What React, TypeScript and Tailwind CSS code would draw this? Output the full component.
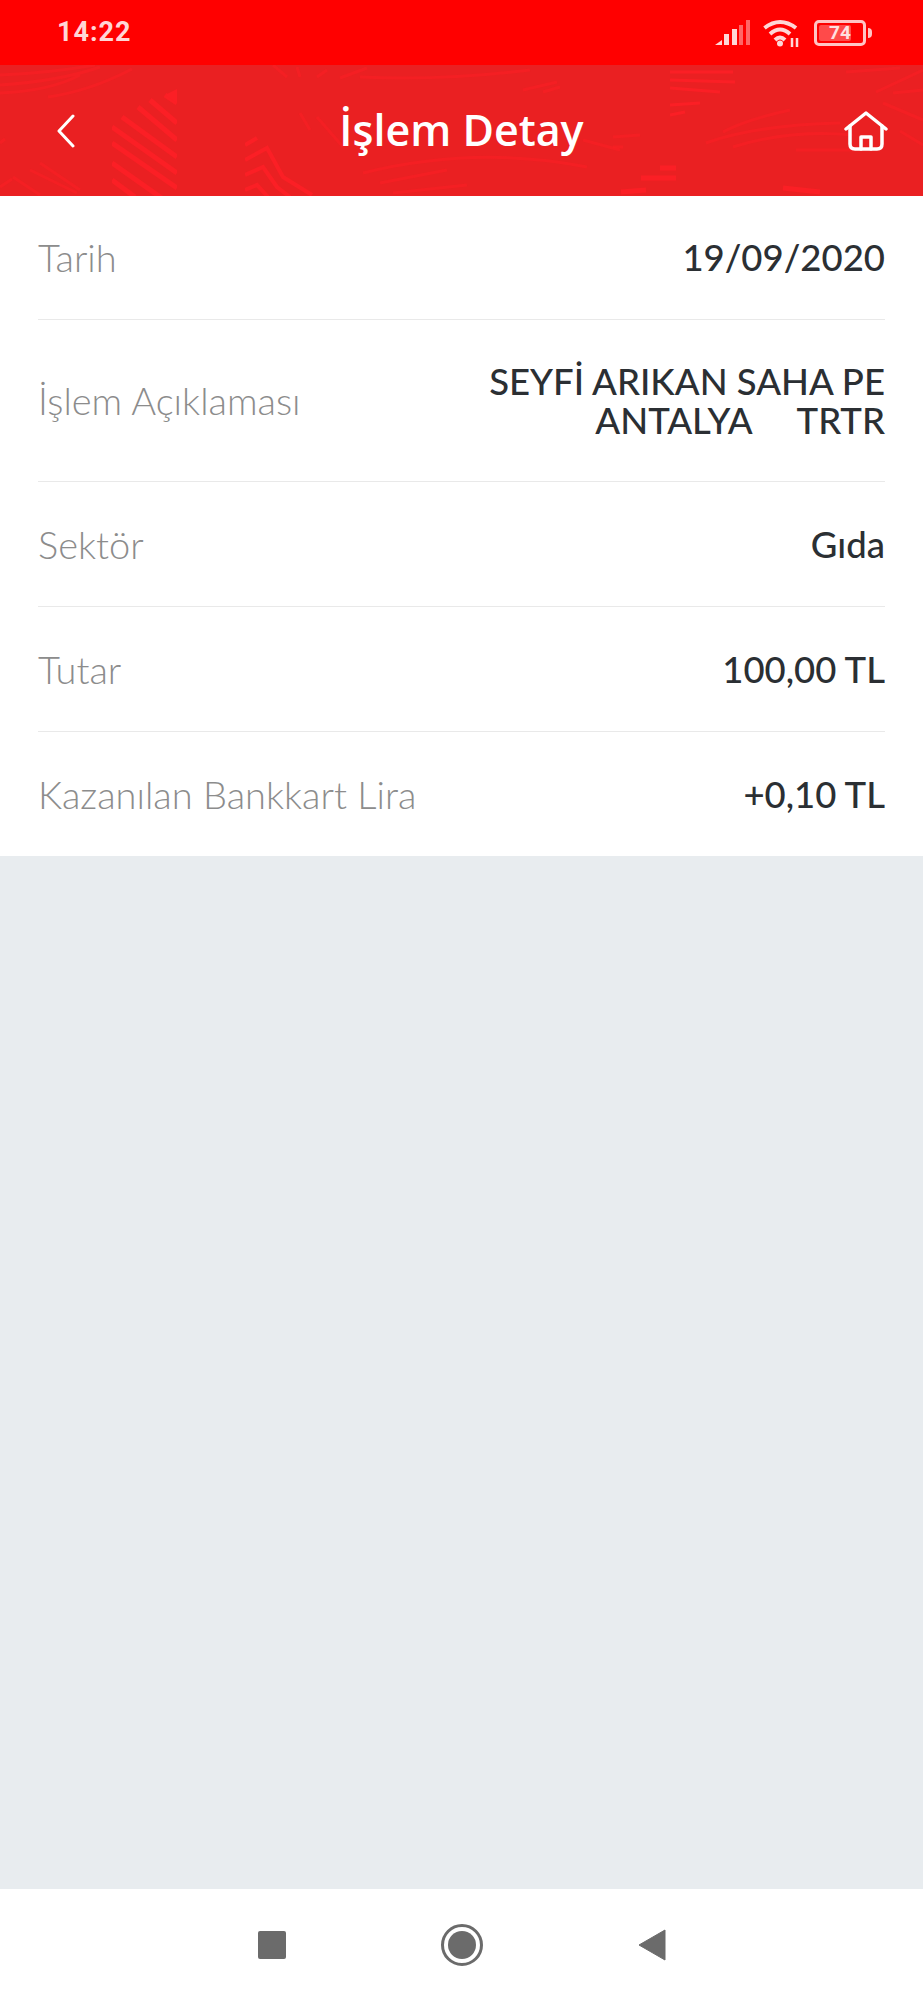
const rows = [
  { label: 'Tarih', value: ['19/09/2020'], height: 'h-[124px] border-b' },
  { label: 'İşlem Açıklaması', value: ['SEYFİ ARIKAN SAHA PE', 'ANTALYA     TRTR'], height: 'h-[162px] border-b' },
  { label: 'Sektör', value: ['Gıda'], height: 'h-[125px] border-b' },
  { label: 'Tutar', value: ['100,00 TL'], height: 'h-[125px] border-b' },
  { label: 'Kazanılan Bankkart Lira', value: ['+0,10 TL'], height: 'h-[124px]' },
]

// faint wave and stripe patches behind the title bar
function HeaderPattern() {
  return (
    <svg className="absolute inset-0 h-full w-full" viewBox="0 0 923 131" fill="none" stroke="#fb1f25" strokeWidth="4">
      <defs>
        <clipPath id="patchA"><rect x="112" y="24" width="65" height="107" /></clipPath>
        <clipPath id="patchB"><rect x="245" y="70" width="90" height="61" /></clipPath>
        <clipPath id="patchC"><rect x="670" y="0" width="65" height="56" /></clipPath>
      </defs>
      <g clipPath="url(#patchA)" strokeWidth="5">
        <path d="M122 52L177 92M138 42L177 75M150 35L177 58M165 30L177 38M112 62L177 108M112 78L177 123M112 98L163 134M112 115L135 132" />
        <path d="M177 24L165 30L177 38Z" fill="#fb1f25" stroke="none" />
      </g>
      <g clipPath="url(#patchB)" strokeWidth="4">
        <path d="M245 80L257 73M245 95L267 83L283 112L312 130M245 110L263 102L277 122L290 132M245 125L257 120L268 132" />
      </g>
      <g strokeWidth="3" strokeOpacity="0.55">
        <path d="M0 10Q50 8 95 0M0 20Q60 16 100 2M0 28Q50 26 80 10M48 32Q90 26 132 4" />
        <path d="M13 112L40 130M30 105L77 128M40 98L80 125M0 122L12 114" />
        <path d="M0 78L5 74M273 0L287 12M297 2L300 12M300 48L310 65" />
        <path d="M317 12L327 5M340 13L367 3M360 12Q443 16 530 5M523 25L557 17M543 27L560 22" />
        <path d="M317 52L343 82M363 108Q477 80 587 102M380 118L447 105M393 128L467 120M583 75L620 85" />
      </g>
      <g clipPath="url(#patchC)" strokeWidth="3">
        <path d="M670 7H733M670 15L735 17M670 23L720 27M670 40L700 38M670 50L685 47" />
      </g>
      <g strokeWidth="3" strokeOpacity="0.55">
        <path d="M613 72L640 70M613 82H623" />
        <path d="M706 78Q756 60 840 58M723 67Q745 55 790 45M733 82Q790 64 853 70M796 85H853" />
        <path d="M846 7L900 3M876 27L923 5M893 28L923 25M883 38L923 55M900 66L923 80" />
      </g>
      <path d="M641 113H676M660 103H676M621 127L646 125M783 123L820 127" strokeWidth="5" />
    </svg>
  )
}

export default function App() {
  return (
    <div className="flex h-[2000px] w-[923px] flex-col bg-[#e8ecef] font-['Lato',sans-serif]">
      <div className="flex h-[65px] items-center justify-between bg-[#ff0000] pl-[57px] pr-[51px]">
        <span className="font-['Roboto',sans-serif] text-[27px] font-bold tracking-[1px] text-[#ffd6d6]">14:22</span>
        <div className="flex items-center">
          <svg width="36" height="26" viewBox="0 0 36 26" className="mr-[12px]">
            <path d="M0 25L7 20V25Z" fill="#ffd6d6" />
            <rect x="9" y="14" width="5" height="11" fill="#ffd6d6" />
            <rect x="17" y="9" width="5" height="16" fill="#ffd6d6" />
            <rect x="24" y="5" width="4" height="20" fill="#ff6666" />
            <rect x="31" y="0" width="4" height="25" fill="#ff6666" />
          </svg>
          <svg width="38" height="28" viewBox="0 0 38 28" fill="none" stroke="#ffd6d6" strokeWidth="4" className="mr-[13px]">
            <path d="M1.5 9Q17 -3 33 9" />
            <path d="M7 15Q17 6 27 15" />
            <path d="M12 21Q17 16 22 21" />
            <circle cx="17" cy="24.5" r="3" fill="#ffd6d6" stroke="none" />
            <path d="M29 19V28M34 19V28" strokeWidth="2.5" />
          </svg>
          <div className="relative flex h-[26px] w-[52px] items-center justify-center rounded-[5px] border-[3px] border-[#ffc4c4]">
            <div className="absolute inset-y-[2px] left-[2px] w-[32px] rounded-[2px] bg-[#ff4a4a]" />
            <span className="relative font-['Roboto',sans-serif] text-[19px] leading-none font-bold text-[#ffe0e0]">74</span>
          </div>
          <div className="ml-[2px] h-[10px] w-[4px] rounded-r-sm bg-[#ffc4c4]" />
        </div>
      </div>

      <div className="relative flex h-[131px] items-center justify-between bg-[#ea2022] pl-[57px] pr-[35px]">
        <HeaderPattern />
        <svg width="18" height="34" viewBox="0 0 18 34" fill="none" stroke="#ffffff" strokeWidth="3" strokeLinecap="round" strokeLinejoin="round" className="relative">
          <path d="M16 2L2 17L16 32" />
        </svg>
        <h1 className="absolute inset-x-0 text-center font-['Open_Sans',sans-serif] text-[43px] font-semibold text-white">İşlem Detay</h1>
        <svg width="44" height="40" viewBox="0 0 44 40" fill="none" stroke="#ffffff" strokeWidth="3.5" strokeLinecap="round" strokeLinejoin="round" className="relative">
          <path d="M2 18L22 2L42 18" />
          <path d="M6 15V33Q6 38 11 38H33Q38 38 38 33V15" />
          <path d="M17 38V26H27V38" />
        </svg>
      </div>

      <div className="bg-white px-[38px]">
        {rows.map(row => (
          <div key={row.label} className={`flex items-center justify-between border-[#e9e9e9] ${row.height}`}>
            <span className="text-[38px] font-light text-[#8c8c8c]">{row.label}</span>
            <div className="text-right text-[36.5px] leading-[39px] font-medium whitespace-pre text-[#2b2f33]">
              {row.value.map(v => <div key={v}>{v}</div>)}
            </div>
          </div>
        ))}
      </div>

      <div className="flex-1" />

      <div className="flex h-[111px] items-center justify-center gap-[155px] bg-white">
        <div className="h-[28px] w-[28px] rounded-[2px] bg-[#6b6b6b]" />
        <div className="flex h-[42px] w-[42px] items-center justify-center rounded-full border-[3px] border-[#6b6b6b]">
          <div className="h-[28px] w-[28px] rounded-full bg-[#6b6b6b]" />
        </div>
        <svg width="28" height="32" viewBox="0 0 28 32">
          <path d="M27 1V31L1 16Z" fill="#6b6b6b" stroke="#6b6b6b" strokeLinejoin="round" />
        </svg>
      </div>
    </div>
  )
}
